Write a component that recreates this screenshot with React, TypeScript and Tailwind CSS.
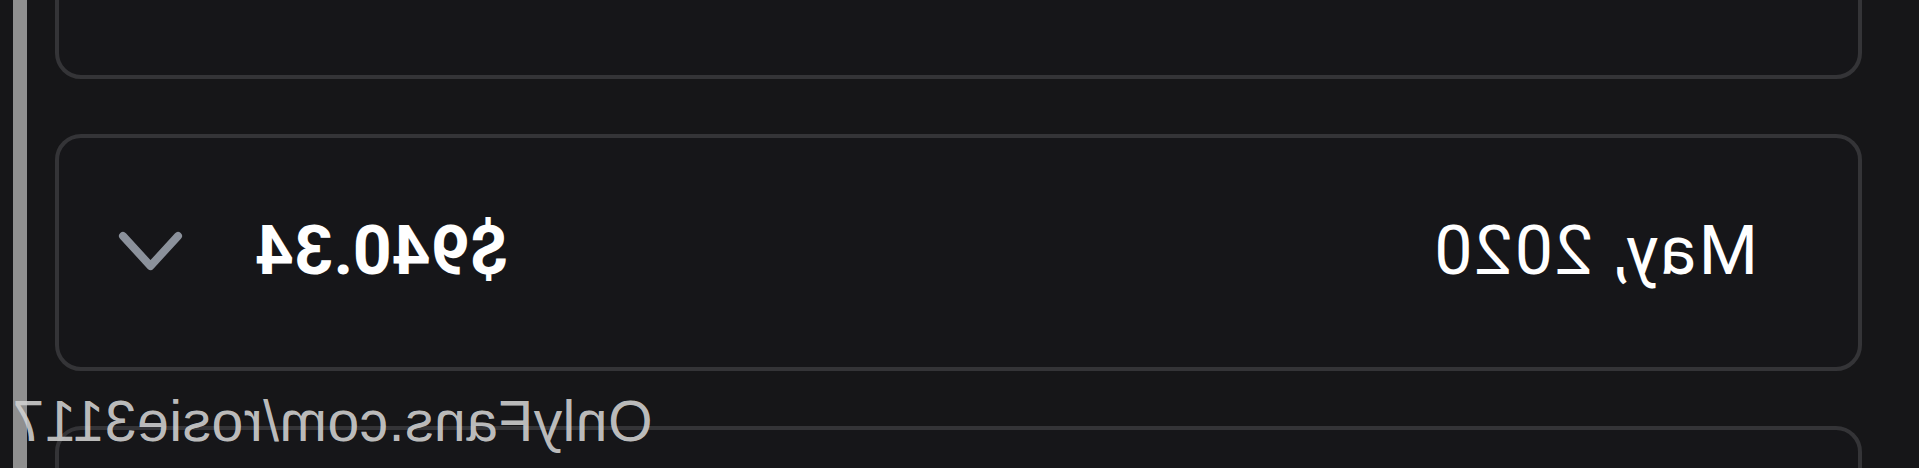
const months = [
  { label: 'June, 2020', amount: '$1,204.10' },
  { label: 'May, 2020', amount: '$940.34' },
  { label: 'April, 2020', amount: '$812.55' },
]

function Chevron() {
  return (
    <svg width="67" height="42" viewBox="0 0 67 42" fill="none" className="shrink-0">
      <path d="M6 6 L33.5 36 L61 6" stroke="#8b919b" strokeWidth="8" strokeLinecap="round" strokeLinejoin="round" />
    </svg>
  )
}

function MonthRow({ label, amount }: { label: string; amount: string }) {
  return (
    <div className="h-[237px] shrink-0 rounded-[26px] border-[4px] border-[#343437] bg-[#161619] flex items-center justify-between pl-[100px] pr-[58px] pb-[3px]">
      <span className="text-[68px] leading-none text-white font-['Roboto',sans-serif] tracking-[2px]">{label}</span>
      <div className="flex items-center gap-[71px]">
        <span className="text-[68px] leading-none text-white font-bold font-['Roboto',sans-serif]">{amount}</span>
        <Chevron />
      </div>
    </div>
  )
}

export default function App() {
  return (
    // the whole capture is mirrored horizontally
    <div className="relative h-[468px] w-full overflow-hidden bg-[#161618] -scale-x-100">
      <div className="flex h-full">
        <div className="flex-1 flex flex-col gap-[55px] pl-[57px] pr-[28px] -mt-[158px]">
          {months.map(m => (
            <MonthRow key={m.label} label={m.label} amount={m.amount} />
          ))}
        </div>
        <div className="w-[14px] bg-[#8f8f8f] shrink-0" />
        <div className="w-[13px] shrink-0" />
      </div>

      {/* watermark */}
      <div className="absolute right-[12px] top-[393px] text-[57px] leading-none text-[#d2d2d2]/90 font-['Liberation_Sans',sans-serif] tracking-[0.5px]">
        OnlyFans.com/rosie3117
      </div>
    </div>
  )
}
